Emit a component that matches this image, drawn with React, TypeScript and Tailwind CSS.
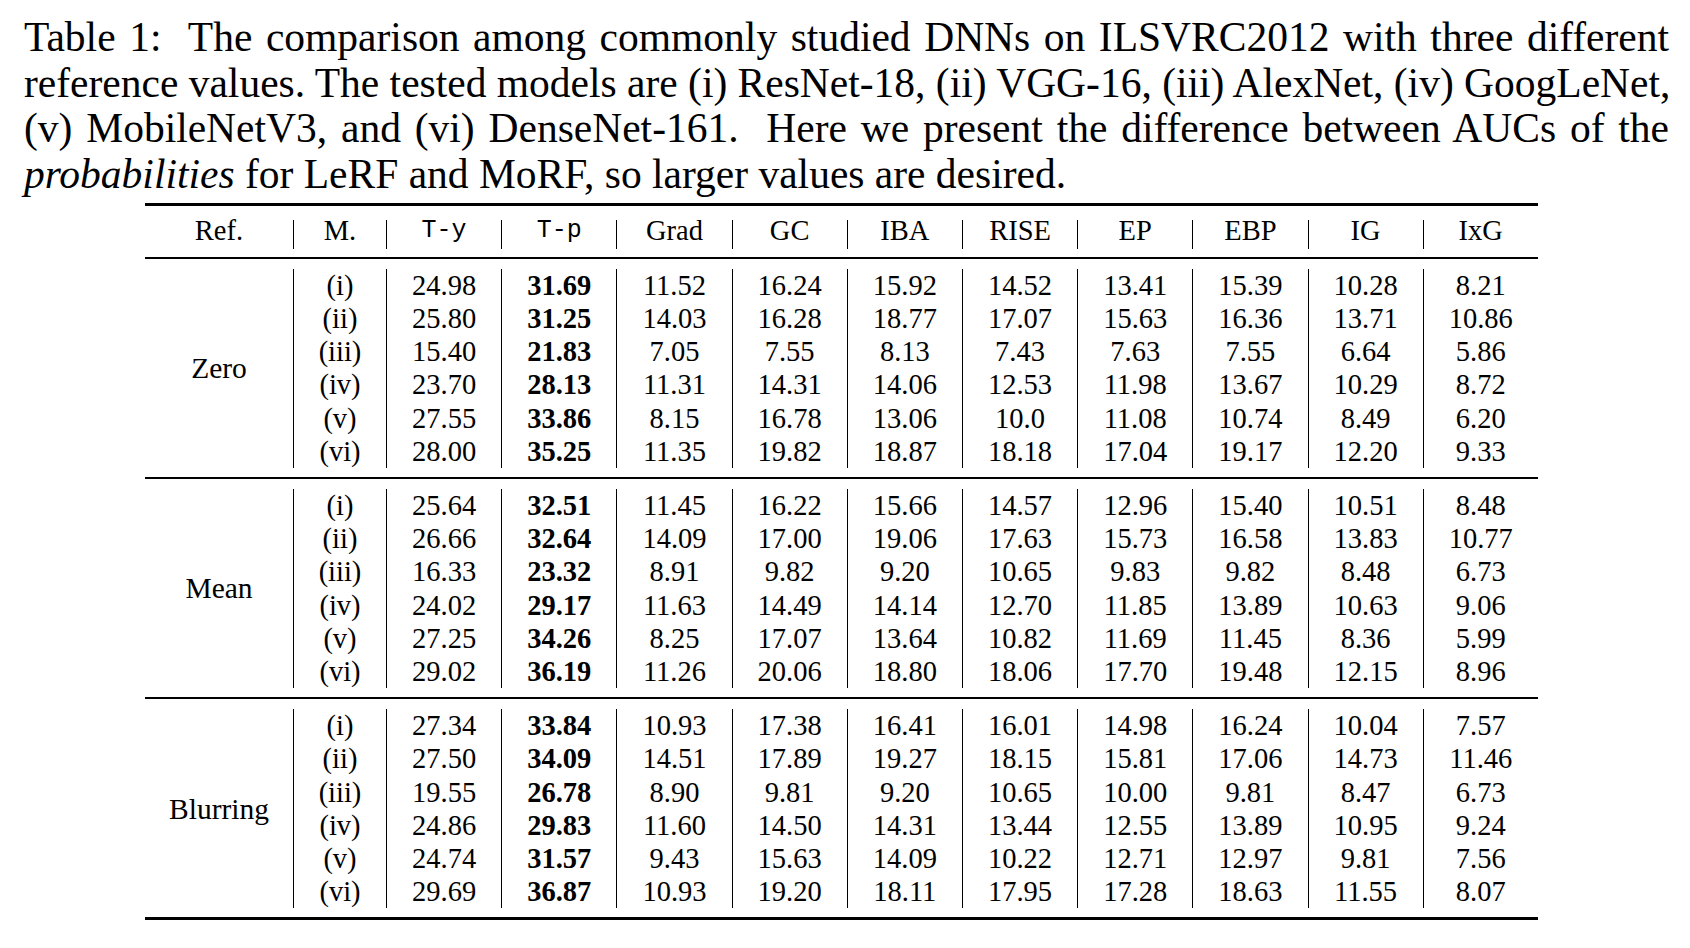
import React from "react";

const headers = ["M.", "T-y", "T-p", "Grad", "GC", "IBA", "RISE", "EP", "EBP", "IG", "IxG"];

const sections: { name: string; rows: string[][] }[] = [
  {
    name: "Zero",
    rows: [
      ["(i)", "24.98", "31.69", "11.52", "16.24", "15.92", "14.52", "13.41", "15.39", "10.28", "8.21"],
      ["(ii)", "25.80", "31.25", "14.03", "16.28", "18.77", "17.07", "15.63", "16.36", "13.71", "10.86"],
      ["(iii)", "15.40", "21.83", "7.05", "7.55", "8.13", "7.43", "7.63", "7.55", "6.64", "5.86"],
      ["(iv)", "23.70", "28.13", "11.31", "14.31", "14.06", "12.53", "11.98", "13.67", "10.29", "8.72"],
      ["(v)", "27.55", "33.86", "8.15", "16.78", "13.06", "10.0", "11.08", "10.74", "8.49", "6.20"],
      ["(vi)", "28.00", "35.25", "11.35", "19.82", "18.87", "18.18", "17.04", "19.17", "12.20", "9.33"],
    ],
  },
  {
    name: "Mean",
    rows: [
      ["(i)", "25.64", "32.51", "11.45", "16.22", "15.66", "14.57", "12.96", "15.40", "10.51", "8.48"],
      ["(ii)", "26.66", "32.64", "14.09", "17.00", "19.06", "17.63", "15.73", "16.58", "13.83", "10.77"],
      ["(iii)", "16.33", "23.32", "8.91", "9.82", "9.20", "10.65", "9.83", "9.82", "8.48", "6.73"],
      ["(iv)", "24.02", "29.17", "11.63", "14.49", "14.14", "12.70", "11.85", "13.89", "10.63", "9.06"],
      ["(v)", "27.25", "34.26", "8.25", "17.07", "13.64", "10.82", "11.69", "11.45", "8.36", "5.99"],
      ["(vi)", "29.02", "36.19", "11.26", "20.06", "18.80", "18.06", "17.70", "19.48", "12.15", "8.96"],
    ],
  },
  {
    name: "Blurring",
    rows: [
      ["(i)", "27.34", "33.84", "10.93", "17.38", "16.41", "16.01", "14.98", "16.24", "10.04", "7.57"],
      ["(ii)", "27.50", "34.09", "14.51", "17.89", "19.27", "18.15", "15.81", "17.06", "14.73", "11.46"],
      ["(iii)", "19.55", "26.78", "8.90", "9.81", "9.20", "10.65", "10.00", "9.81", "8.47", "6.73"],
      ["(iv)", "24.86", "29.83", "11.60", "14.50", "14.31", "13.44", "12.55", "13.89", "10.95", "9.24"],
      ["(v)", "24.74", "31.57", "9.43", "15.63", "14.09", "10.22", "12.71", "12.97", "9.81", "7.56"],
      ["(vi)", "29.69", "36.87", "10.93", "19.20", "18.11", "17.95", "17.28", "18.63", "11.55", "8.07"],
    ],
  },
];

function Section({ name, rows }: { name: string; rows: string[][] }) {
  return (
    <div className="grid grid-cols-[148px_93px_repeat(10,115.2px)] pt-[10px] pb-[9px]">
      <div className="row-span-6 flex items-center justify-center text-[29.5px]">{name}</div>
      {rows.map((r, ri) =>
        r.map((v, ci) => (
          <div
            key={`${ri}-${ci}`}
            className={
              ci === 2
                ? "h-[33.2px] leading-[33.2px] text-center border-l border-black font-bold"
                : "h-[33.2px] leading-[33.2px] text-center border-l border-black"
            }
          >
            {v}
          </div>
        ))
      )}
    </div>
  );
}

export default function App() {
  return (
    <div
      className="w-[1690px] h-[948px] bg-white text-black overflow-hidden"
      style={{ fontFamily: '"Liberation Serif", "Times New Roman", serif' }}
    >
      <div className="pl-[24px] w-[1669px] pt-[15px] text-[41.5px] leading-[45.6px]">
        <div className="whitespace-nowrap text-justify [text-align-last:justify]">
          Table 1:&nbsp; The comparison among commonly studied DNNs on ILSVRC2012 with three different
        </div>
        <div className="whitespace-nowrap text-justify [text-align-last:justify]">
          reference values. The tested models are (i) ResNet-18, (ii) VGG-16, (iii) AlexNet, (iv) GoogLeNet,
        </div>
        <div className="whitespace-nowrap text-justify [text-align-last:justify]">
          (v) MobileNetV3, and (vi) DenseNet-161.&nbsp; Here we present the difference between AUCs of the
        </div>
        <div className="whitespace-nowrap">
          <i>probabilities</i> for LeRF and MoRF, so larger values are desired.
        </div>
      </div>

      <div className="ml-[145px] mt-[6px] w-[1393px] text-[28.5px]">
        <div className="h-[3px] bg-black" />
        <div className="grid grid-cols-[148px_93px_repeat(10,115.2px)] pt-[14px] pb-[7.5px]">
          <div className="h-[29px] leading-[22px] text-center">Ref.</div>
          {headers.map((h) =>
            h === "T-y" || h === "T-p" ? (
              <div
                key={h}
                className="h-[29px] leading-[22px] text-center border-l border-black text-[25px]"
                style={{ fontFamily: '"Liberation Mono", "Courier New", monospace' }}
              >
                {h}
              </div>
            ) : (
              <div key={h} className="h-[29px] leading-[22px] text-center border-l border-black">
                {h}
              </div>
            )
          )}
        </div>
        <div className="h-[2px] bg-black" />
        <Section {...sections[0]} />
        <div className="h-[2px] bg-black" />
        <Section {...sections[1]} />
        <div className="h-[2px] bg-black" />
        <Section {...sections[2]} />
        <div className="h-[3px] bg-black" />
      </div>
    </div>
  );
}
